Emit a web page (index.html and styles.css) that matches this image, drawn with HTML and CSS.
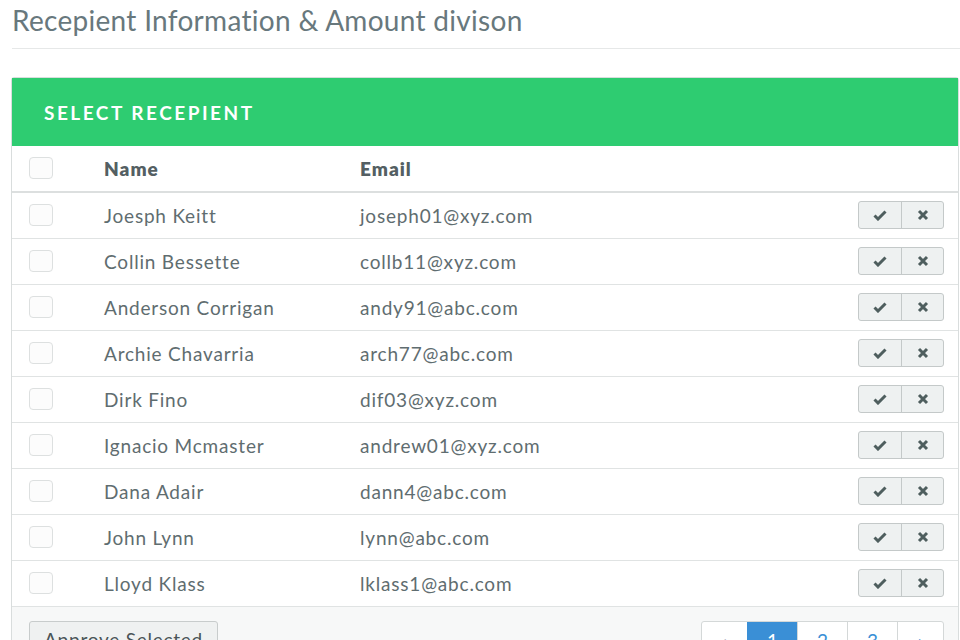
FILE: index.html
```html
<!DOCTYPE html>
<html>
<head>
<meta charset="utf-8">
<link rel="stylesheet" href="styles.css">
</head>
<body>
<div class="page">
  <h1 class="title">Recepient Information &amp; Amount divison</h1>
  <div class="panel">
    <div class="panel-head">SELECT RECEPIENT</div>
    <div class="row row-head">
      <span class="cb"></span>
      <span class="name">Name</span>
      <span class="email">Email</span>
    </div>
    <div class="rows" id="rows"></div>
    <div class="panel-foot">
      <button class="approve">Approve Selected</button>
      <div class="pager">
        <span class="pg">‹</span>
        <span class="pg active">1</span>
        <span class="pg">2</span>
        <span class="pg">3</span>
        <span class="pg">›</span>
      </div>
    </div>
  </div>
</div>
<template id="rowtpl">
  <div class="row">
    <span class="cb"></span>
    <span class="name"></span>
    <span class="email"></span>
    <span class="btns">
      <span class="btn"><svg width="14" height="12" viewBox="0 0 14 12"><path d="M1.5 6.5 L5 10 L12.5 2.5" fill="none" stroke="currentColor" stroke-width="3" stroke-linejoin="miter"/></svg></span>
      <span class="btn"><svg width="12" height="12" viewBox="0 0 12 12"><path d="M2 2 L10 10 M10 2 L2 10" fill="none" stroke="currentColor" stroke-width="3"/></svg></span>
    </span>
  </div>
</template>
<script>
const data = [
  ["Joesph Keitt","joseph01@xyz.com"],
  ["Collin Bessette","collb11@xyz.com"],
  ["Anderson Corrigan","andy91@abc.com"],
  ["Archie Chavarria","arch77@abc.com"],
  ["Dirk Fino","dif03@xyz.com"],
  ["Ignacio Mcmaster","andrew01@xyz.com"],
  ["Dana Adair","dann4@abc.com"],
  ["John Lynn","lynn@abc.com"],
  ["Lloyd Klass","lklass1@abc.com"]
];
const tpl = document.getElementById('rowtpl');
const rows = document.getElementById('rows');
data.forEach(([n,e]) => {
  const r = tpl.content.cloneNode(true);
  r.querySelector('.name').textContent = n;
  r.querySelector('.email').textContent = e;
  rows.appendChild(r);
});
</script>
</body>
</html>
```
FILE: styles.css
```css
* { box-sizing: border-box; }
html, body { margin: 0; padding: 0; background: #fff; }
body {
  font-family: Lato, "Open Sans", sans-serif;
  color: #5d6a6e;
  width: 960px;
  height: 640px;
  overflow: hidden;
}
.page { padding: 0 0 0 11px; }
.title {
  margin: 0 0 0 1px;
  padding: 3px 0 0 0;
  height: 49px;
  font-size: 28px;
  font-weight: 400;
  letter-spacing: 0.3px;
  color: #68787d;
  border-bottom: 1px solid #e6e8e8;
}
.panel {
  margin-top: 28px;
  width: 948px;
  border: 1px solid #d9dddd;
  border-radius: 3px 3px 0 0;
}
.panel-head {
  height: 68px;
  background: #2ecc71;
  color: #fff;
  font-weight: 700;
  font-size: 19px;
  letter-spacing: 2.5px;
  display: flex;
  align-items: center;
  padding-left: 32px;
}
.row {
  display: flex;
  align-items: center;
  height: 46px;
  padding: 0 14px 0 17px;
  border-bottom: 1px solid #e0e3e3;
  font-size: 19px;
  letter-spacing: 0.8px;
  color: #5f6d70;
}
.row-head {
  height: 47px;
  border-bottom: 2px solid #dcdfdf;
  font-weight: 800;
  letter-spacing: 1px;
  color: #545f63;
}
.cb {
  width: 24px;
  height: 22px;
  border: 1px solid #dde0e0;
  border-radius: 4px;
  background: #fcfcfc;
  flex: none;
  margin-top: -2px;
}
.name { margin-left: 51px; width: 256px; flex: none; }
.email { flex: 1; }
.btns {
  display: flex;
  border: 1px solid #c4c9c9;
  border-radius: 3px;
  background: #eef1f1;
  height: 28px;
  margin-top: -2px;
}
.btn {
  width: 42px;
  display: flex;
  align-items: center;
  justify-content: center;
  color: #4e5e5e;
}
.btn + .btn { border-left: 1px solid #c4c9c9; }
.panel-foot {
  background: #f7f8f8;
  height: 40px;
  display: flex;
  justify-content: space-between;
  align-items: flex-start;
  padding: 14px 14px 0 17px;
}
.approve {
  font-family: inherit;
  font-size: 19px;
  letter-spacing: 0.75px;
  color: #4a5457;
  background: #eff1f1;
  border: 1px solid #c8cccc;
  border-radius: 3px;
  width: 189px;
  height: 36px;
  padding: 0;
}
.pager {
  display: flex;
  border: 1px solid #d4d8d8;
  border-radius: 3px;
  background: #fff;
}
.pg {
  height: 36px;
  width: 50px;
  display: flex;
  align-items: center;
  justify-content: center;
  font-size: 19px;
  color: #3a8fd6;
  border-left: 1px solid #d4d8d8;
}
.pg:first-child { border-left: none; width: 45px; color: #aab; }
.pg:last-child { width: 46px; }
.pg.active { background: #3a8fd6; color: #fff; border-left-color: #3a8fd6; }
```
